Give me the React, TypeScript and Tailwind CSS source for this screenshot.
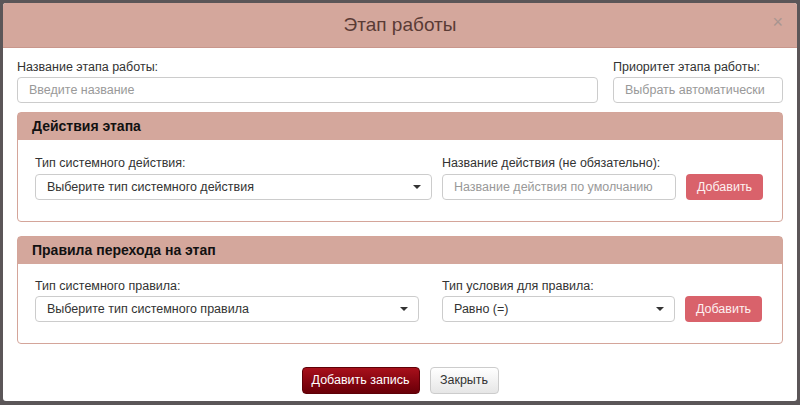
import * as React from 'react';

const font = { fontFamily: '"Liberation Sans", Arial, sans-serif' };

function Caret() {
  return <span className="ml-auto h-0 w-0 border-x-[4px] border-t-[4px] border-x-transparent border-t-[#333]" />;
}

function Select({ text, width }: { text: string; width: string }) {
  return (
    <div className={`${width} flex h-[26px] items-center rounded-[4px] border border-[#ccc] bg-white pl-[11px] pr-[10px] text-[12.5px] text-[#333]`}>
      <span>{text}</span>
      <Caret />
    </div>
  );
}

function Input({ placeholder, width }: { placeholder: string; width: string }) {
  return (
    <div className={`${width} flex h-[26px] items-center rounded-[4px] border border-[#ccc] bg-white px-[11px] text-[12.5px] text-[#999]`}>
      {placeholder}
    </div>
  );
}

function Label({ children }: { children: React.ReactNode }) {
  return <div className="mb-[2px] text-[12.5px] leading-[16px] text-[#333]">{children}</div>;
}

function AddButton() {
  return (
    <button className="mt-[19px] flex h-[26px] w-[77px] items-center justify-center rounded-[4px] bg-[#d9626b] text-[12.5px] text-[#fdf0f0]">
      Добавить
    </button>
  );
}

function Panel({ title, children }: { title: string; children: React.ReactNode }) {
  return (
    <div className="rounded-[4px] border border-[#d4a59a]">
      <div className="flex h-[27px] items-center bg-[#d4a79c] px-[14px] text-[14px] font-bold text-[#111]">{title}</div>
      <div className="flex gap-[10px] pb-[21px] pl-[17px] pr-[19px] pt-[14px]">{children}</div>
    </div>
  );
}

export default function App() {
  return (
    <div className="h-[405px] w-[800px] bg-[#5b5658] p-[3px]" style={font}>
      <div className="flex h-[398px] flex-col overflow-hidden rounded-[3px] bg-white">
        <div className="relative flex h-[45px] shrink-0 items-center justify-center border-b border-[#c9978c] bg-[#d4a79c]">
          <span className="text-[19px] text-[#5a3b35]">Этап работы</span>
          <span className="absolute right-[14px] top-[10px] text-[18px] leading-none text-[#a89590]">×</span>
        </div>
        <div className="flex flex-col px-[14px] pt-[11px]">
          <div className="flex gap-[15px]">
            <div className="flex flex-col">
              <Label>Название этапа работы:</Label>
              <Input placeholder="Введите название" width="w-[581px]" />
            </div>
            <div className="flex flex-col">
              <Label>Приоритет этапа работы:</Label>
              <Input placeholder="Выбрать автоматически" width="w-[170px]" />
            </div>
          </div>
          <div className="mt-[9px]">
            <Panel title="Действия этапа">
              <div className="flex flex-col pt-[1px]">
                <Label>Тип системного действия:</Label>
                <div className="mt-[1px]">
                  <Select text="Выберите тип системного действия" width="w-[397px]" />
                </div>
              </div>
              <div className="flex flex-col pt-[1px]">
                <Label>Название действия (не обязательно):</Label>
                <div className="mt-[1px]">
                  <Input placeholder="Название действия по умолчанию" width="w-[234px]" />
                </div>
              </div>
              <div className="pt-[1px]">
                <AddButton />
              </div>
            </Panel>
          </div>
          <div className="mt-[14px]">
            <Panel title="Правила перехода на этап">
              <div className="flex flex-col">
                <Label>Тип системного правила:</Label>
                <Select text="Выберите тип системного правила" width="w-[384px]" />
              </div>
              <div className="ml-[13px] flex flex-col">
                <Label>Тип условия для правила:</Label>
                <Select text="Равно (=)" width="w-[233px]" />
              </div>
              <div className="-mt-[1px]">
                <AddButton />
              </div>
            </Panel>
          </div>
        </div>
        <div className="mt-[23px] flex justify-center gap-[10px]">
          <button className="h-[27px] w-[118px] rounded-[4px] border border-[#5e0007] bg-gradient-to-b from-[#a8101b] to-[#6a0008] text-[12.5px] text-white">
            Добавить запись
          </button>
          <button className="h-[27px] w-[69px] rounded-[4px] border border-[#ccc] bg-gradient-to-b from-white to-[#e6e6e6] text-[12.5px] text-[#333]">
            Закрыть
          </button>
        </div>
      </div>
    </div>
  );
}
